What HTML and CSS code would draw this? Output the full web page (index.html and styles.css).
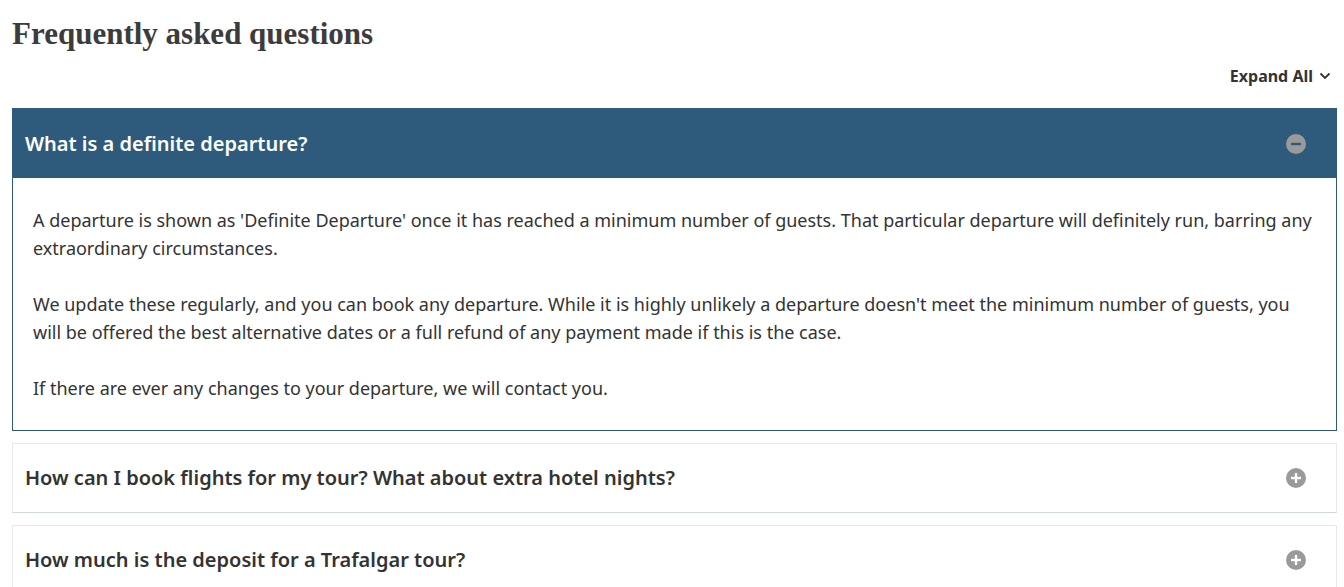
FILE: index.html
```html
<!DOCTYPE html>
<html lang="en">
<head>
<meta charset="utf-8">
<title>FAQ</title>
<link rel="stylesheet" href="styles.css">
</head>
<body>
<main class="faq">
  <h1 class="faq-title">Frequently asked questions</h1>
  <div class="faq-tools">
    <button class="expand-all" type="button">Expand All
      <svg class="chev" width="12" height="8" viewBox="0 0 12 8" aria-hidden="true"><path d="M1.5 1.5 L6 6 L10.5 1.5" fill="none" stroke="#333" stroke-width="1.8"/></svg>
    </button>
  </div>
  <section class="item open">
    <div class="item-head">
      <h2 class="item-q">What is a definite departure?</h2>
      <svg class="toggle" width="20" height="20" viewBox="0 0 20 20" aria-hidden="true"><circle cx="10" cy="10" r="10" fill="#9a9a9a"/><rect x="5" y="8.8" width="10" height="2.4" fill="#2e5b7b"/></svg>
    </div>
    <div class="item-body">
      <p>A departure is shown as 'Definite Departure' once it has reached a minimum number of guests. That particular departure will definitely run, barring any extraordinary circumstances.</p>
      <p>We update these regularly, and you can book any departure. While it is highly unlikely a departure doesn't meet the minimum number of guests, you will be offered the best alternative dates or a full refund of any payment made if this is the case.</p>
      <p>If there are ever any changes to your departure, we will contact you.</p>
    </div>
  </section>
  <section class="item">
    <div class="item-head">
      <h2 class="item-q">How can I book flights for my tour? What about extra hotel nights?</h2>
      <svg class="toggle" width="20" height="20" viewBox="0 0 20 20" aria-hidden="true"><circle cx="10" cy="10" r="10" fill="#9a9a9a"/><rect x="5" y="8.8" width="10" height="2.4" fill="#fff"/><rect x="8.8" y="5" width="2.4" height="10" fill="#fff"/></svg>
    </div>
  </section>
  <section class="item">
    <div class="item-head">
      <h2 class="item-q">How much is the deposit for a Trafalgar tour?</h2>
      <svg class="toggle" width="20" height="20" viewBox="0 0 20 20" aria-hidden="true"><circle cx="10" cy="10" r="10" fill="#9a9a9a"/><rect x="5" y="8.8" width="10" height="2.4" fill="#fff"/><rect x="8.8" y="5" width="2.4" height="10" fill="#fff"/></svg>
    </div>
  </section>
</main>
</body>
</html>
```
FILE: styles.css
```css
* { box-sizing: border-box; }
html, body { margin: 0; padding: 0; background: #fff; }
body { font-family: "Noto Sans", sans-serif; color: #333; }
.faq { padding: 14px 7px 0 12px; }
.faq-title {
  margin: 0;
  font-family: "Liberation Serif", serif;
  font-weight: 700;
  font-size: 31px;
  line-height: 40px;
  color: #3c3c3c;
}
.faq-tools { display: flex; justify-content: flex-end; padding: 10px 6px 0 0; height: 54px; }
.expand-all {
  display: flex; align-items: center; gap: 6px;
  background: none; border: 0; padding: 0;
  font-family: "Noto Sans", sans-serif; font-weight: 700; font-size: 16px; color: #333;
  height: 24px; cursor: pointer;
}
.item { border: 1px solid #e8e8e8; border-bottom-color: #cfd8dd; margin-bottom: 12px; }
.item-head {
  display: flex; align-items: center; justify-content: space-between;
  height: 68px; padding: 0 30px 0 12px;
}
.item-q { margin: 0; font-size: 20px; line-height: 26px; font-weight: 600; color: #333; }
.item:not(.open) .item-q { margin-top: -1px; }
.item.open { border-color: #2e5b7b; }
.item.open .item-head { background: #2e5b7b; height: 69px; }
.item.open .item-q { color: #fff; }
.item-body { padding: 28px 20px 28px; }
.item-body p { margin: 0 0 28px; font-size: 18px; line-height: 28px; color: #333; }
.item-body p:last-child { margin-bottom: 0; }
```
